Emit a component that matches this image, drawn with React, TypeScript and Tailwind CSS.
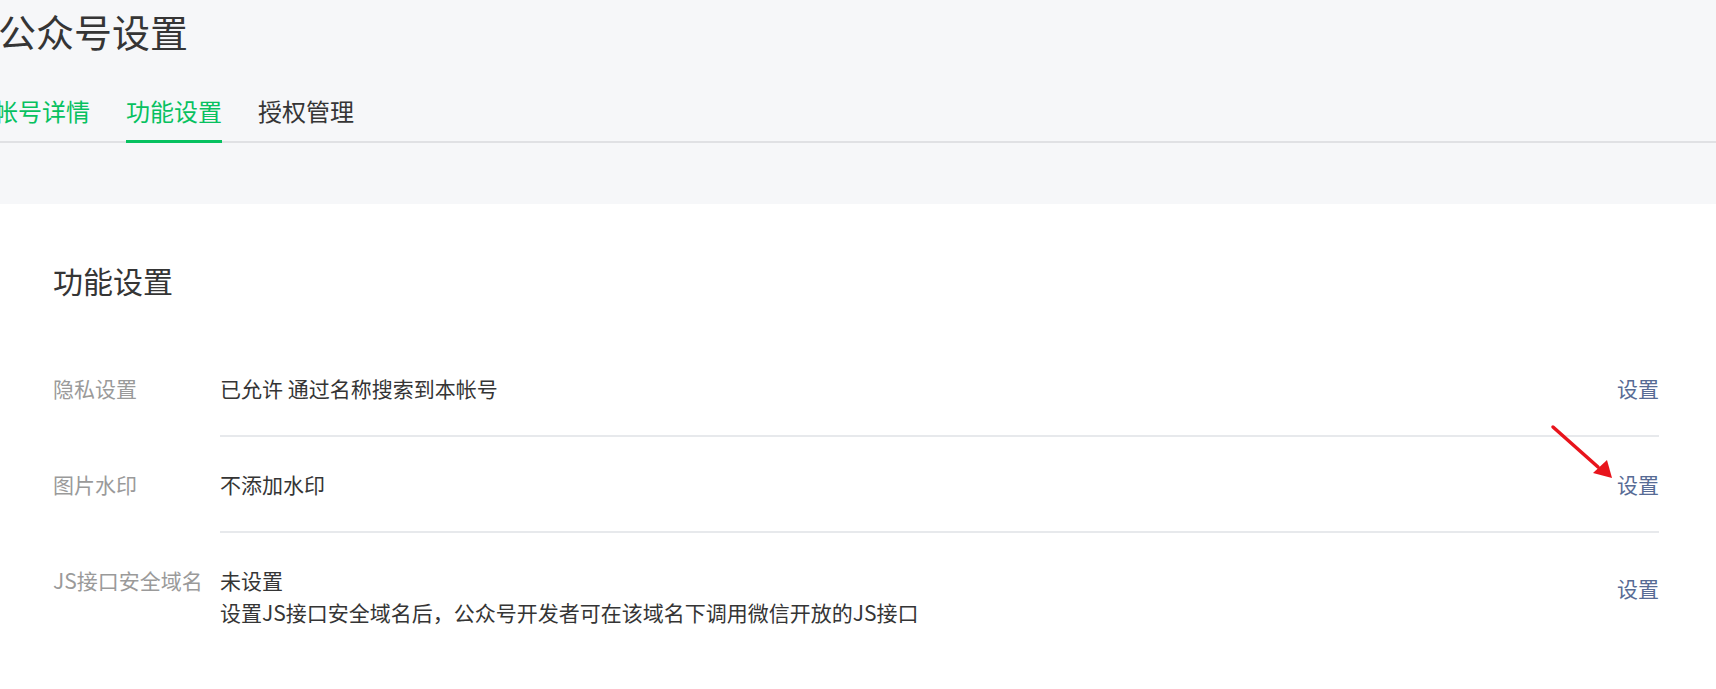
const font = "font-['Noto_Sans_CJK_SC','Noto_Sans',sans-serif]";

const rows = [
  { label: "隐私设置", lines: ["已允许 通过名称搜索到本帐号"] },
  { label: "图片水印", lines: ["不添加水印"] },
  {
    label: "JS接口安全域名",
    lines: ["未设置", "设置JS接口安全域名后，公众号开发者可在该域名下调用微信开放的JS接口"],
  },
];

export default function App() {
  return (
    <div className={`relative min-h-[689px] w-full overflow-hidden bg-white text-[#353535] ${font}`}>
      <header className="h-[204px] bg-[#f6f7f9]">
        <h1 className="-ml-[2px] pt-[5px] text-[38px] leading-[52px] font-normal">公众号设置</h1>
        <nav className="mt-[38px] flex gap-9 border-b-2 border-[#e0e1e4] pl-0">
          <Tab label="帐号详情" className="-ml-[6px] text-[#07c160]" />
          <Tab label="功能设置" active />
          <Tab label="授权管理" />
        </nav>
      </header>

      <main className="pl-[53px] pr-[57px]">
        <h2 className="mt-[56px] text-[30px] leading-[40px] font-normal">功能设置</h2>
        <div className="mt-[41px]">
          {rows.map((row, i) => (
            <div key={row.label} className="flex items-start text-[21px] leading-[32px]">
              <div className="w-[167px] shrink-0 py-[31px] text-[#9a9a9a]">{row.label}</div>
              <div
                className={`flex flex-1 items-start justify-between py-[31px] ${
                  i < rows.length - 1 ? "border-b-2 border-[#e7e9ec]" : ""
                }`}
              >
                <div>
                  {row.lines.map((line) => (
                    <p key={line}>{line}</p>
                  ))}
                </div>
                <a href="#" className={`text-[#576b95] ${row.lines.length > 1 ? "mt-[8px]" : ""}`}>
                  设置
                </a>
              </div>
            </div>
          ))}
        </div>
      </main>

      {/* red annotation arrow */}
      <svg className="pointer-events-none absolute left-[1546px] top-[420px]" width="74" height="66" viewBox="0 0 74 66">
        <line x1="7" y1="7" x2="52" y2="47" stroke="#e8141c" strokeWidth="3.5" strokeLinecap="round" />
        <polygon points="66,58 47,53 61,40" fill="#e8141c" />
      </svg>
    </div>
  );
}

function Tab({ label, active, className = "" }: { label: string; active?: boolean; className?: string }) {
  return (
    <a
      href="#"
      className={`-mb-[2px] border-b-[3px] pb-[13px] text-[24px] leading-[32px] ${
        active ? "border-[#07c160] text-[#07c160]" : "border-transparent"
      } ${className}`}
    >
      {label}
    </a>
  );
}
